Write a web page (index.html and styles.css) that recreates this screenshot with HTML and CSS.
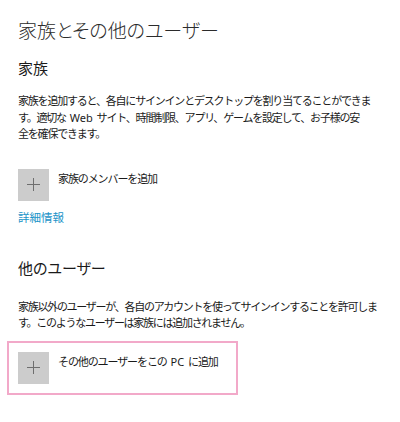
FILE: index.html
```html
<!DOCTYPE html>
<html lang="ja">
<head>
<meta charset="utf-8">
<link rel="stylesheet" href="styles.css">
</head>
<body>
<main class="page">
  <h1 class="title">家族とその他のユーザー</h1>
  <section class="section">
    <h2 class="heading heading-family">家族</h2>
    <p class="desc desc-family"><span class="line">家族を追加すると、各自にサインインとデスクトップを割り当てることができま</span><span class="line">す。適切な<span class="latin"> Web </span>サイト、時間制限、アプリ、ゲームを設定して、お子様の安</span><span class="line">全を確保できます。</span></p>
    <div class="add-row add-family">
      <span class="plus-box">
        <svg width="13" height="13" viewBox="0 0 13 13"><path d="M6.5 0V13M0 6.5H13" stroke="#6e6e6e" stroke-width="1" fill="none"/></svg>
      </span>
      <span class="add-label">家族のメンバーを追加</span>
    </div>
    <a class="link" href="#">詳細情報</a>
  </section>
  <section class="section">
    <h2 class="heading heading-other">他のユーザー</h2>
    <p class="desc desc-other">家族以外のユーザーが、各自のアカウントを使ってサインインすることを許可します。このようなユーザーは家族には追加されません。</p>
    <div class="focus-frame">
      <div class="add-row">
        <span class="plus-box">
          <svg width="13" height="13" viewBox="0 0 13 13"><path d="M6.5 0V13M0 6.5H13" stroke="#6e6e6e" stroke-width="1" fill="none"/></svg>
        </span>
        <span class="add-label">その他のユーザーをこの<span class="latin"> PC </span>に追加</span>
      </div>
    </div>
  </section>
</main>
</body>
</html>
```
FILE: styles.css
```css
html, body {
  margin: 0;
  padding: 0;
  background: #ffffff;
}
body {
  font-family: "Noto Sans", "Noto Sans CJK JP", sans-serif;
  color: #1a1a1a;
}
.page {
  padding: 18px 20px 0 18px;
  width: 362px;
}
.title {
  margin: 0;
  font-size: 19px;
  line-height: 26px;
  font-weight: 300;
  color: #2b2b2b;
  font-feature-settings: "palt" 1;
}
.heading {
  margin: 0;
  font-size: 15px;
  line-height: 20px;
  font-weight: 400;
  color: #1a1a1a;
  font-feature-settings: "palt" 1;
}
.heading-family {
  margin-top: 14px;
}
.heading-other {
  margin-top: 32px;
}
.desc {
  margin: 15px 0 0 0;
  font-size: 11px;
  line-height: 16.5px;
  color: #1a1a1a;
}
.desc-family {
  letter-spacing: -1.2px;
}
.line {
  display: block;
  white-space: nowrap;
}
.desc-other {
  margin-top: 21px;
  letter-spacing: -1.28px;
}
.latin {
  letter-spacing: 0;
  word-spacing: 1px;
}
.add-row {
  display: flex;
  align-items: flex-start;
  gap: 9px;
}
.add-family {
  margin-top: 26px;
}
.plus-box {
  width: 31px;
  height: 32px;
  background: #cccccc;
  display: flex;
  align-items: center;
  justify-content: center;
  flex: none;
}
.add-label {
  font-size: 11px;
  letter-spacing: -1.1px;
  line-height: 16px;
  margin-top: 2px;
  white-space: nowrap;
  color: #1a1a1a;
}
.link {
  display: block;
  margin-top: 9px;
  font-size: 11.5px;
  line-height: 16px;
  color: #1a93c8;
  text-decoration: none;
}
.focus-frame {
  margin: 9px 0 0 -11px;
  width: 209px;
  border: 2px solid #f2a9c9;
  padding: 9px;
}
```
